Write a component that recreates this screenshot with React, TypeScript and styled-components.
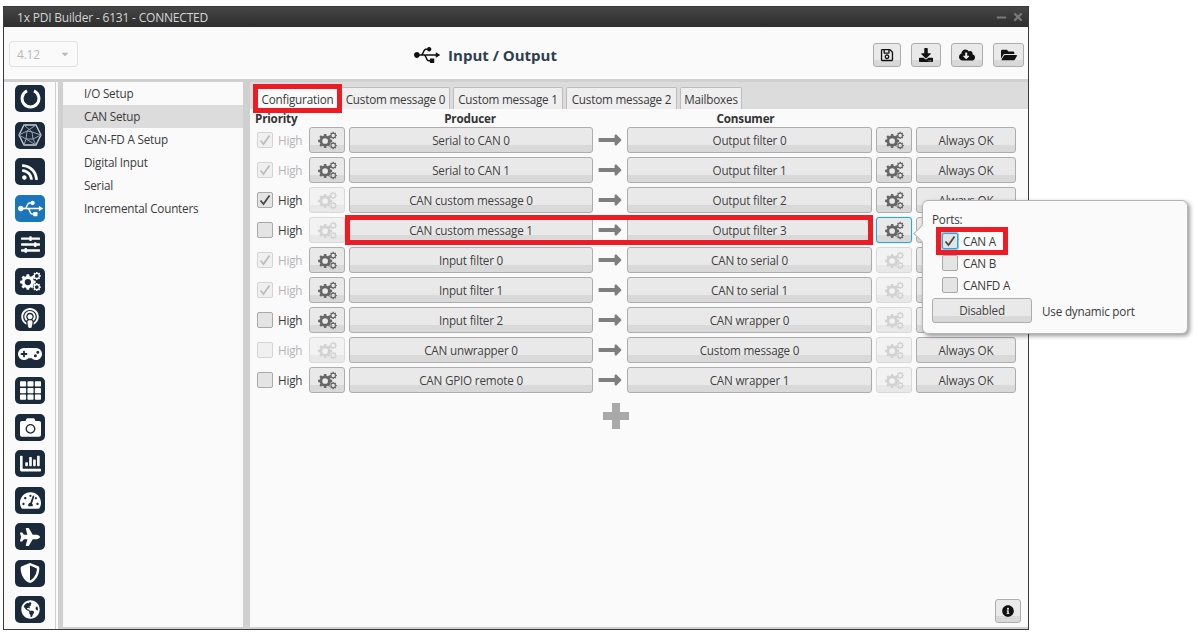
import { FC, ReactNode } from 'react';
import styled, { createGlobalStyle, css } from 'styled-components';
import {
  FaRss,
  FaUsb,
  FaSlidersH,
  FaPodcast,
  FaGamepad,
  FaTh,
  FaCamera,
  FaChartBar,
  FaTachometerAlt,
  FaPlane,
  FaShieldAlt,
  FaGlobeAmericas,
  FaRegSave,
  FaDownload,
  FaCloudDownloadAlt,
  FaFolderOpen,
  FaInfoCircle,
  FaLongArrowAltRight,
  FaMinus,
  FaTimes,
  FaCaretDown,
} from 'react-icons/fa';

const GlobalStyle = createGlobalStyle`
  html, body {
    margin: 0;
    background: #ffffff;
    font-family: "Open Sans", "Liberation Sans", sans-serif;
    font-size: 11.7px;
    letter-spacing: -0.2px;
    color: #3a3a3a;
  }
`;

const buttonFace = css`
  background: linear-gradient(to bottom, #e9e9e9 0, #e9e9e9 72%, #d9d9d9 72%, #d9d9d9 100%);
  border: 1px solid #adadad;
  border-radius: 3px;
  box-sizing: border-box;
`;

const mutedFace = css`
  background: linear-gradient(to bottom, #f2f2f2 0, #f2f2f2 72%, #e8e8e8 72%, #e8e8e8 100%);
  border: 1px solid #d9d9d9;
  border-radius: 3px;
  box-sizing: border-box;
`;

const Page = styled.div`
  padding: 6px 0 0 3px;
  width: 1026px;
`;

const Window = styled.div`
  position: relative;
  width: 1026px;
  height: 624px;
  box-sizing: border-box;
  border: 1px solid #3a3a3a;
  background: #fafafa;
  display: flex;
  flex-direction: column;
`;

const TitleBar = styled.div`
  height: 20px;
  flex: none;
  background: linear-gradient(to bottom, #464646, #383838 55%, #2e2e2e);
  color: #d6d6d6;
  font-size: 12px;
  line-height: 21px;
  padding: 0 4px 0 13px;
  display: flex;
  justify-content: space-between;
  align-items: center;
`;

const WindowControls = styled.div`
  display: flex;
  align-items: center;
  gap: 5px;
  color: #7a7a7a;
  font-size: 11px;
`;

const Toolbar = styled.div`
  height: 52px;
  flex: none;
  display: grid;
  grid-template-columns: 1fr auto 1fr;
  align-items: center;
  padding: 0 4px 0 5px;
`;

const VersionSelect = styled.div`
  width: 69px;
  height: 26px;
  box-sizing: border-box;
  border: 1px solid #e2e2e2;
  border-radius: 3px;
  padding: 0 7px;
  display: flex;
  align-items: center;
  justify-content: space-between;
  color: #b9b9b9;
  font-size: 12px;
  margin-top: 2px;
`;

const PageTitle = styled.div`
  display: flex;
  align-items: center;
  gap: 8px;
  font-size: 15px;
  letter-spacing: 0;
  font-weight: 700;
  color: #2c3e50;
  margin-top: 4px;
  margin-right: 62px;
  svg {
    color: #111;
    font-size: 26px;
  }
`;

const ToolActions = styled.div`
  display: flex;
  justify-content: flex-end;
  gap: 10px;
  margin-top: 4px;
`;

const ToolButton = styled.div<{ $w: number }>`
  ${buttonFace}
  width: ${(p) => p.$w}px;
  height: 24px;
  display: flex;
  align-items: center;
  justify-content: center;
  color: #111;
  font-size: 14px;
`;

const Main = styled.div`
  flex: 1;
  min-height: 0;
  display: flex;
  background: #d0d0d0;
  padding: 3px 0 2px;
`;

const IconRail = styled.div`
  width: 54px;
  flex: none;
  background: linear-gradient(to right, #fafafa 51px, #cfcfcf 51px, #cfcfcf 52px, #fafafa 52px);
  margin-bottom: -2px;
  padding: 3px 0 0 11px;
  box-sizing: border-box;
  display: flex;
  flex-direction: column;
  gap: 9.5px;
`;

const RailIcon = styled.div<{ $active?: boolean }>`
  width: 30px;
  height: 27px;
  flex: none;
  border-radius: 5px;
  background: ${(p) => (p.$active ? '#1b75bb' : '#1b2a3b')};
  color: #fff;
  display: flex;
  align-items: center;
  justify-content: center;
`;

const ListPane = styled.div`
  width: 180px;
  flex: none;
  margin-left: 5px;
  background: #fafafa;
`;

const ListItem = styled.div<{ $selected?: boolean }>`
  height: 23px;
  line-height: 23px;
  padding-left: 21px;
  background: ${(p) => (p.$selected ? '#dcdcdc' : 'transparent')};
`;

const ContentPane = styled.div`
  flex: 1;
  margin-left: 7px;
  background: #fafafa;
  display: flex;
  flex-direction: column;
  position: relative;
`;

const TabStrip = styled.div`
  height: 27px;
  flex: none;
  background: #dcdcdc;
  display: flex;
  align-items: flex-end;
  gap: 3px;
  padding-left: 7px;
`;

const Tab = styled.div<{ $active?: boolean; $w: number }>`
  width: ${(p) => p.$w}px;
  height: 22px;
  box-sizing: border-box;
  text-align: center;
  line-height: 23px;
  background: ${(p) => (p.$active ? '#fafafa' : '#efefef')};
  border: 1px solid #bdbdbd;
  border-bottom: none;
  border-radius: 2px 2px 0 0;
`;

const columns = '16px 28px 36px 244px 26px 245px 36px 100px';

const HeadRow = styled.div`
  display: grid;
  grid-template-columns: ${columns};
  column-gap: 4px;
  padding-left: 7px;
  height: 18px;
  line-height: 19px;
  font-weight: 700;
  color: #333;
`;

const HeadPriority = styled.div`
  grid-column: 1 / span 3;
  margin-left: -2px;
`;

const HeadProducer = styled.div`
  grid-column: 4;
  text-align: center;
  padding-right: 2px;
`;

const HeadConsumer = styled.div`
  grid-column: 6;
  text-align: center;
  padding-right: 8px;
`;

const Rows = styled.div`
  display: flex;
  flex-direction: column;
  gap: 4px;
`;

const Row = styled.div`
  display: grid;
  grid-template-columns: ${columns};
  column-gap: 4px;
  align-items: center;
  padding-left: 7px;
  height: 26px;
`;

const CheckBox = styled.div<{ $disabled?: boolean; $focus?: boolean }>`
  width: 16px;
  height: 16px;
  box-sizing: border-box;
  border-radius: 2px;
  border: 1px solid ${(p) => (p.$focus ? '#2ba6d6' : p.$disabled ? '#d4d4d4' : '#a9a9a9')};
  background: ${(p) => (p.$disabled ? '#f0f0f0' : '#e4e4e4')};
  box-shadow: ${(p) => (p.$focus ? '0 0 0 1px #7fcbe8' : 'none')};
  display: flex;
  align-items: center;
  justify-content: center;
  color: ${(p) => (p.$disabled ? '#bdbdbd' : '#4a4a4a')};
`;

const HighLabel = styled.div<{ $disabled?: boolean }>`
  color: ${(p) => (p.$disabled ? '#b4b4b4' : '#3a3a3a')};
  padding-left: 1px;
`;

const GearButton = styled.div<{ $state: 'on' | 'off' | 'focus' }>`
  ${(p) => (p.$state === 'off' ? mutedFace : buttonFace)}
  ${(p) => p.$state === 'focus' && 'border: 1px solid #2ba6d6; box-shadow: 0 0 1px #2ba6d6;'}
  height: 26px;
  display: flex;
  align-items: center;
  justify-content: center;
  color: ${(p) => (p.$state === 'off' ? '#d2d2d2' : '#666666')};
`;

const FaceButton = styled.div`
  ${buttonFace}
  height: 26px;
  line-height: 25px;
  text-align: center;
  color: #3f3f3f;
`;

const ArrowCell = styled.div`
  display: flex;
  align-items: center;
  justify-content: center;
  color: #7e7e7e;
  font-size: 26px;
`;

const AddRow = styled.div`
  display: flex;
  padding: 10px 0 0 353px;
  color: #a9a9a9;
`;

const InfoButton = styled.div`
  ${buttonFace}
  position: absolute;
  right: 7px;
  bottom: 4px;
  width: 26px;
  height: 24px;
  display: flex;
  align-items: center;
  justify-content: center;
  color: #111;
  font-size: 12px;
`;

/* annotation boxes painted over the screenshot */
const Highlight = styled.div<{ $x: number; $y: number; $w: number; $h: number }>`
  position: absolute;
  left: ${(p) => p.$x}px;
  top: ${(p) => p.$y}px;
  width: ${(p) => p.$w}px;
  height: ${(p) => p.$h}px;
  box-sizing: border-box;
  border: 5px solid #ed1c24;
  pointer-events: none;
  z-index: 5;
`;

const Popup = styled.div`
  position: absolute;
  left: 918px;
  top: 193px;
  width: 266px;
  height: 134px;
  box-sizing: border-box;
  background: #fafafa;
  border: 1px solid #b5b5b5;
  border-radius: 6px;
  box-shadow: 2px 2px 4px rgba(0, 0, 0, 0.4);
  padding: 10px 10px 0 9px;
  z-index: 3;
  display: flex;
  flex-direction: column;
  &::before {
    content: '';
    position: absolute;
    left: -7px;
    top: 26px;
    width: 12px;
    height: 12px;
    background: #fafafa;
    border-left: 1px solid #b5b5b5;
    border-bottom: 1px solid #b5b5b5;
    transform: rotate(45deg);
  }
`;

const PortsTitle = styled.div`
  height: 16px;
  line-height: 16px;
`;

const PortList = styled.div`
  display: flex;
  flex-direction: column;
  gap: 6px;
  padding: 6px 0 0 10px;
`;

const PortRow = styled.div`
  display: flex;
  align-items: center;
  gap: 5px;
  height: 16px;
`;

const DynamicRow = styled.div`
  display: flex;
  align-items: center;
  gap: 10px;
  margin-top: 5px;
`;

const DisabledButton = styled(FaceButton)`
  width: 100px;
  height: 25px;
  line-height: 23px;
`;

const CheckMark: FC = () => (
  <svg width="12" height="12" viewBox="0 0 12 12">
    <path d="M1.5 6.5 L4.5 10 L10.5 1.5" fill="none" stroke="currentColor" strokeWidth="1.8" />
  </svg>
);

const RingLogo: FC = () => (
  <svg width="21" height="21" viewBox="0 0 21 21">
    <path d="M7 2.9 A8.4 8.4 0 1 0 14 2.9" fill="none" stroke="#fff" strokeWidth="3" />
  </svg>
);

const HexLogo: FC = () => (
  <svg width="24" height="22" viewBox="0 0 24 22" fill="none" stroke="#9aa3ad" strokeWidth="1">
    <path d="M6 1 H18 L23 11 L18 21 H6 L1 11 Z" strokeWidth="1.3" stroke="#c9ced3" />
    <path d="M6 1 L14 8 L23 11 L15 15 L18 21 M1 11 L9 7 L18 1 M1 11 L8 15 L6 21 M8 15 L15 15 L14 8 L9 7 L8 15 M8 15 L18 21" />
  </svg>
);

// outline of one toothed wheel with a round hole, for an evenodd fill
const wheelPath = (cx: number, cy: number, outer: number, root: number, hole: number, teeth: number) => {
  const step = (Math.PI * 2) / teeth;
  const at = (r: number, a: number) =>
    `${(cx + r * Math.cos(a)).toFixed(2)} ${(cy + r * Math.sin(a)).toFixed(2)}`;
  let d = '';
  for (let i = 0; i < teeth; i++) {
    const a = i * step;
    d += `${i === 0 ? 'M' : 'L'}${at(root, a - step * 0.34)} L${at(outer, a - step * 0.2)} L${at(outer, a + step * 0.2)} L${at(root, a + step * 0.34)} `;
  }
  d += `Z M${cx - hole} ${cy} a${hole} ${hole} 0 1 0 ${hole * 2} 0 a${hole} ${hole} 0 1 0 ${-hole * 2} 0 Z`;
  return d;
};

const cogsPath = [
  wheelPath(7.5, 10, 7.5, 5.8, 3, 8),
  wheelPath(16, 4.2, 3.9, 3, 1.8, 8),
  wheelPath(16, 14.8, 3.9, 3, 1.8, 8),
].join(' ');

const Cogs: FC<{ size?: number }> = ({ size = 19 }) => (
  <svg width={size} height={size} viewBox="0 0 20 19">
    <path d={cogsPath} fill="currentColor" fillRule="evenodd" />
  </svg>
);

const PlusMark: FC = () => (
  <svg width="26" height="26" viewBox="0 0 26 26">
    <path d="M9 0 H17 V9 H26 V17 H17 V26 H9 V17 H0 V9 H9 Z" fill="currentColor" />
  </svg>
);

const railIcons: ReactNode[] = [
  <RingLogo key="ring" />,
  <HexLogo key="hex" />,
  <FaRss key="rss" size={18} />,
  <FaUsb key="usb" size={25} />,
  <FaSlidersH key="sliders" size={19} />,
  <Cogs key="cogs" size={21} />,
  <FaPodcast key="podcast" size={20} />,
  <FaGamepad key="gamepad" size={24} />,
  <FaTh key="grid" size={21} />,
  <FaCamera key="camera" size={21} />,
  <FaChartBar key="chart" size={21} />,
  <FaTachometerAlt key="gauge" size={21} />,
  <FaPlane key="plane" size={20} />,
  <FaShieldAlt key="shield" size={20} />,
  <FaGlobeAmericas key="globe" size={19} />,
];

const setupItems = [
  'I/O Setup',
  'CAN Setup',
  'CAN-FD A Setup',
  'Digital Input',
  'Serial',
  'Incremental Counters',
];

type Gear = 'on' | 'off' | 'focus';

interface RowData {
  checked: boolean;
  disabled: boolean;
  left: Gear;
  producer: string;
  consumer: string;
  right: Gear;
  covered?: boolean; // status button sits behind the ports popup
}

const rows: RowData[] = [
  { checked: true, disabled: true, left: 'on', producer: 'Serial to CAN 0', consumer: 'Output filter 0', right: 'on' },
  { checked: true, disabled: true, left: 'on', producer: 'Serial to CAN 1', consumer: 'Output filter 1', right: 'on' },
  { checked: true, disabled: false, left: 'off', producer: 'CAN custom message 0', consumer: 'Output filter 2', right: 'on' },
  { checked: false, disabled: false, left: 'off', producer: 'CAN custom message 1', consumer: 'Output filter 3', right: 'focus', covered: true },
  { checked: true, disabled: true, left: 'on', producer: 'Input filter 0', consumer: 'CAN to serial 0', right: 'off', covered: true },
  { checked: true, disabled: true, left: 'on', producer: 'Input filter 1', consumer: 'CAN to serial 1', right: 'off', covered: true },
  { checked: false, disabled: false, left: 'on', producer: 'Input filter 2', consumer: 'CAN wrapper 0', right: 'off', covered: true },
  { checked: false, disabled: true, left: 'off', producer: 'CAN unwrapper 0', consumer: 'Custom message 0', right: 'off' },
  { checked: false, disabled: false, left: 'on', producer: 'CAN GPIO remote 0', consumer: 'CAN wrapper 1', right: 'off' },
];

const App: FC = () => (
  <>
    <GlobalStyle />
    <Page>
      <Window>
        <TitleBar>
          <span>1x PDI Builder - 6131 - CONNECTED</span>
          <WindowControls>
            <FaMinus />
            <FaTimes size={12} />
          </WindowControls>
        </TitleBar>
        <Toolbar>
          <VersionSelect>
            <span>4.12</span>
            <FaCaretDown size={10} />
          </VersionSelect>
          <PageTitle>
            <FaUsb />
            <span>Input / Output</span>
          </PageTitle>
          <ToolActions>
            <ToolButton $w={28}>
              <FaRegSave />
            </ToolButton>
            <ToolButton $w={30}>
              <FaDownload />
            </ToolButton>
            <ToolButton $w={32}>
              <FaCloudDownloadAlt size={16} />
            </ToolButton>
            <ToolButton $w={31}>
              <FaFolderOpen size={16} />
            </ToolButton>
          </ToolActions>
        </Toolbar>
        <Main>
          <IconRail>
            {railIcons.map((icon, i) => (
              <RailIcon key={i} $active={i === 3}>
                {icon}
              </RailIcon>
            ))}
          </IconRail>
          <ListPane>
            {setupItems.map((item) => (
              <ListItem key={item} $selected={item === 'CAN Setup'}>
                {item}
              </ListItem>
            ))}
          </ListPane>
          <ContentPane>
            <TabStrip>
              <Tab $active $w={81}>
                Configuration
              </Tab>
              <Tab $w={109}>Custom message 0</Tab>
              <Tab $w={110}>Custom message 1</Tab>
              <Tab $w={111}>Custom message 2</Tab>
              <Tab $w={62}>Mailboxes</Tab>
            </TabStrip>
            <HeadRow>
              <HeadPriority>Priority</HeadPriority>
              <HeadProducer>Producer</HeadProducer>
              <HeadConsumer>Consumer</HeadConsumer>
            </HeadRow>
            <Rows>
              {rows.map((row) => (
                <Row key={row.producer}>
                  <CheckBox $disabled={row.disabled}>{row.checked && <CheckMark />}</CheckBox>
                  <HighLabel $disabled={row.disabled}>High</HighLabel>
                  <GearButton $state={row.left}>
                    <Cogs />
                  </GearButton>
                  <FaceButton>{row.producer}</FaceButton>
                  <ArrowCell>
                    <FaLongArrowAltRight />
                  </ArrowCell>
                  <FaceButton>{row.consumer}</FaceButton>
                  <GearButton $state={row.right}>
                    <Cogs />
                  </GearButton>
                  <FaceButton>{row.covered ? '' : 'Always OK'}</FaceButton>
                </Row>
              ))}
            </Rows>
            <AddRow>
              <PlusMark />
            </AddRow>
            <InfoButton>
              <FaInfoCircle />
            </InfoButton>
          </ContentPane>
        </Main>
        <Popup>
          <PortsTitle>Ports:</PortsTitle>
          <PortList>
            <PortRow>
              <CheckBox $focus>
                <CheckMark />
              </CheckBox>
              CAN A
            </PortRow>
            <PortRow>
              <CheckBox />
              CAN B
            </PortRow>
            <PortRow>
              <CheckBox />
              CANFD A
            </PortRow>
          </PortList>
          <DynamicRow>
            <DisabledButton>Disabled</DisabledButton>
            <span>Use dynamic port</span>
          </DynamicRow>
        </Popup>
        <Highlight $x={249} $y={77} $w={89} $h={29} />
        <Highlight $x={341} $y={208} $w={528} $h={30} />
        <Highlight $x={932} $y={220} $w={72} $h={28} />
      </Window>
    </Page>
  </>
);

export default App;
